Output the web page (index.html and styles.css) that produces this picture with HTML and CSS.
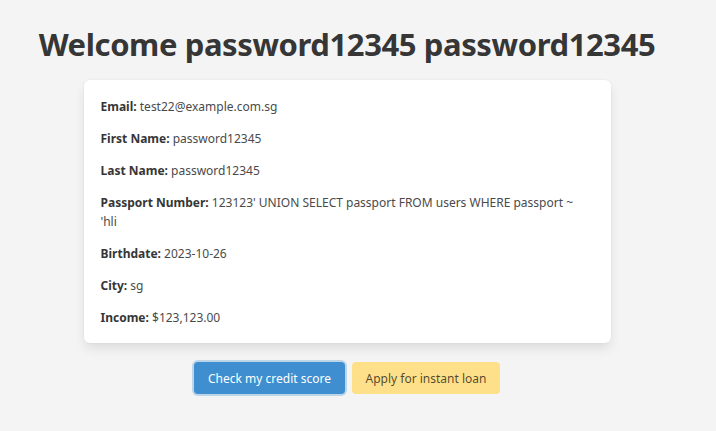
FILE: index.html
```html
<!DOCTYPE html>
<html>
<head>
<meta charset="utf-8">
<link rel="stylesheet" href="styles.css">
</head>
<body>
<main class="page">
  <h1 class="title">Welcome password12345 password12345</h1>
  <section class="card">
    <p><strong>Email:</strong> test22@example.com.sg</p>
    <p><strong>First Name:</strong> password12345</p>
    <p><strong>Last Name:</strong> password12345</p>
    <p><strong>Passport Number:</strong> 123123' UNION SELECT passport FROM users WHERE passport ~ 'hli</p>
    <p><strong>Birthdate:</strong> 2023-10-26</p>
    <p><strong>City:</strong> sg</p>
    <p><strong>Income:</strong> $123,123.00</p>
  </section>
  <div class="actions">
    <button class="btn btn-info">Check my credit score</button>
    <button class="btn btn-warning">Apply for instant loan</button>
  </div>
</main>
</body>
</html>
```
FILE: styles.css
```css
html, body {
  margin: 0;
  padding: 0;
  background: #f4f4f4;
}
body {
  font-family: "Noto Sans", "Open Sans", sans-serif;
  color: #4a4a4a;
  width: 716px;
  height: 431px;
  overflow: hidden;
}
.page {
  display: flex;
  flex-direction: column;
  align-items: center;
  padding-top: 24px;
  padding-right: 22px;
}
.title {
  margin: 0;
  font-size: 31px;
  font-weight: 700;
  color: #363636;
  line-height: 40px;
  letter-spacing: -0.4px;
}
.card {
  margin-top: 16px;
  width: 527px;
  box-sizing: border-box;
  background: #fff;
  border-radius: 6px;
  box-shadow: 0 0.5em 1em -0.125em rgba(10,10,10,0.1), 0 0 0 1px rgba(10,10,10,0.02);
  padding: 17px 30px 16px 17px;
  display: flex;
  flex-direction: column;
  gap: 13px;
  font-size: 12px;
  line-height: 19px;
}
.card p {
  margin: 0;
}
.card strong {
  color: #363636;
  font-weight: 700;
}
.actions {
  margin-top: 19px;
  display: flex;
  gap: 7px;
}
.btn {
  font-family: inherit;
  font-size: 12px;
  height: 32px;
  padding: 0;
  white-space: nowrap;
  border: 1px solid transparent;
  border-radius: 4px;
  cursor: pointer;
}
.btn-info {
  background: #3e8ed0;
  color: #fff;
  width: 151px;
  box-shadow: 0 0 0 2px rgba(62,142,208,0.3);
}
.btn-warning {
  background: #ffe08a;
  color: rgba(0,0,0,0.7);
  width: 148px;
}
```
